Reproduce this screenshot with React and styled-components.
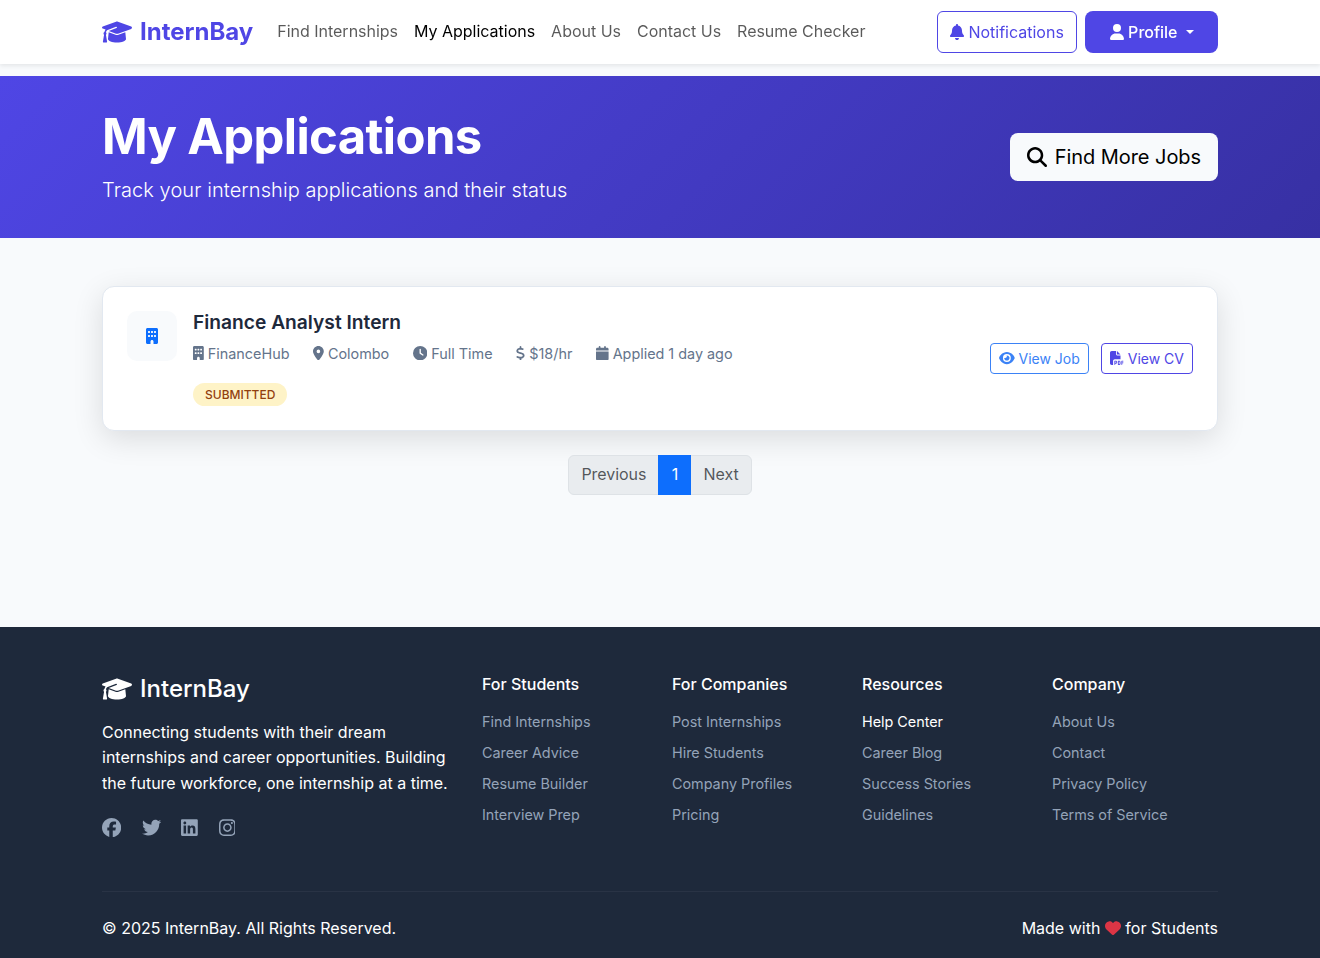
import React from "react";
import styled, { createGlobalStyle, css } from "styled-components";
import {
  FaBell,
  FaUser,
  FaMagnifyingGlass,
  FaBuilding,
  FaLocationDot,
  FaClock,
  FaDollarSign,
  FaCalendar,
  FaEye,
  FaFilePdf,
  FaFacebook,
  FaTwitter,
  FaLinkedin,
  FaInstagram,
  FaHeart,
} from "react-icons/fa6";

const GlobalStyle = createGlobalStyle`
  *, *::before, *::after { box-sizing: border-box; }
  body {
    margin: 0;
    font-family: "Inter", "Liberation Sans", sans-serif;
    font-size: 16px;
    line-height: 1.6;
    color: #1e293b;
    background: #f8fafc;
  }
  h1, h2, h3, h4, p, ul { margin: 0; padding: 0; }
  ul { list-style: none; }
  a { color: inherit; text-decoration: none; }
  button { font-family: inherit; cursor: pointer; }
`;

/* Each glyph is 1em tall; $w is its advance width in em. */
const Icon = styled.span`
  display: inline-block;
  width: ${(p) => p.$w || 1}em;
  height: 1em;
  line-height: 1;
  vertical-align: -0.125em;
  color: ${(p) => p.$color || "inherit"};

  svg {
    display: block;
    width: 100%;
    height: 100%;
  }
`;

const CapIcon = styled(Icon)`
  margin-bottom: 1px;
`;

const Page = styled.div`
  display: flex;
  flex-direction: column;
  min-height: 958px;
`;

const Container = styled.div`
  width: 1140px;
  margin: 0 auto;
  padding: 0 12px;
`;

const Navbar = styled.header`
  position: sticky;
  top: 0;
  z-index: 10;
  height: 64px;
  margin-bottom: 12px;
  background: #fff;
  box-shadow: 0 2px 4px rgba(0, 0, 0, 0.08);
  will-change: transform;
`;

const NavInner = styled(Container)`
  display: flex;
  align-items: center;
  height: 100%;
`;

const Brand = styled.a`
  display: flex;
  align-items: center;
  gap: 8px;
  margin-right: 16px;
  font-size: 24px;
  font-weight: 700;
  line-height: 36px;
  color: #4f46e5;
`;

const NavLinks = styled.nav`
  display: flex;
  flex: 1;
`;

const NavLink = styled.a`
  padding: 7px 8px 9px;
  line-height: 24px;
  letter-spacing: -0.015px;
  color: ${(p) => (p.$active ? "#000" : "rgba(0, 0, 0, 0.65)")};
`;

const NavActions = styled.div`
  display: flex;
  gap: 8px;
`;

const NotificationsButton = styled.button`
  height: 42px;
  padding: 0 12.5px 0 12px;
  border: 1px solid #4f46e5;
  border-radius: 6px;
  background: transparent;
  color: #4f46e5;
  font-size: 16px;
  line-height: 24px;
`;

const ProfileButton = styled.button`
  height: 42px;
  padding: 0 24.5px;
  border: 0;
  border-radius: 8px;
  background: #4f46e5;
  color: #fff;
  font-size: 16px;
  font-weight: 500;
  line-height: 24px;

  &::after {
    content: "";
    display: inline-block;
    margin-left: 8px;
    vertical-align: 4.08px;
    border-top: 4.8px solid;
    border-right: 4.8px solid transparent;
    border-left: 4.8px solid transparent;
  }
`;

const Hero = styled.section`
  padding: 32px 0;
  color: #fff;
  background: linear-gradient(135deg, #4f46e5 0%, #3730a3 100%);
`;

const HeroInner = styled(Container)`
  display: flex;
  align-items: center;
  justify-content: space-between;
`;

const HeroTitle = styled.h1`
  margin-bottom: 8px;
  font-size: 49px;
  font-weight: 700;
  line-height: 57.6px;
  letter-spacing: -0.64px;
`;

const HeroLead = styled.p`
  font-size: 20px;
  font-weight: 300;
  letter-spacing: 0.08px;
`;

const FindButton = styled.a`
  display: flex;
  align-items: center;
  gap: 8px;
  height: 48px;
  padding: 0 17px;
  border-radius: 8px;
  background: #f8fafc;
  color: #000;
  font-size: 20px;
  line-height: 30px;
  letter-spacing: -0.06px;
`;

const Main = styled.main`
  height: 389.4px;
  padding-top: 48px;
`;

const Card = styled.article`
  display: flex;
  align-items: center;
  height: 145px;
  padding: 24px;
  border: 1px solid #e2e8f0;
  border-radius: 12px;
  background: #fff;
  box-shadow: 0 8px 30px rgba(0, 0, 0, 0.12);
`;

const CompanyLogo = styled.div`
  display: flex;
  align-items: center;
  justify-content: center;
  align-self: flex-start;
  width: 50px;
  height: 50px;
  margin-right: 16px;
  border-radius: 10px;
  background: #f8fafc;
  color: #0d6efd;
`;

const JobInfo = styled.div`
  flex: 1;
  align-self: flex-start;
`;

const JobTitle = styled.h2`
  margin-bottom: 8px;
  font-size: 19.2px;
  font-weight: 600;
  line-height: 1.2;
`;

const MetaRow = styled.div`
  display: flex;
  gap: 23.7px;
  margin-bottom: 18px;
  color: #64748b;
  font-size: 14.4px;
  letter-spacing: -0.01px;
`;

const StatusBadge = styled.span`
  display: block;
  width: max-content;
  padding: 4px 12px;
  border-radius: 20px;
  background: #fef3c7;
  color: #92400e;
  font-size: 12px;
  font-weight: 500;
  line-height: 15px;
  text-transform: uppercase;
`;

const CardActions = styled.div`
  display: flex;
  gap: 12px;
`;

const OutlineButton = styled.a`
  padding: 4px 8px;
  border: 1px solid currentColor;
  border-radius: 4px;
  color: ${(p) => p.$color};
  font-size: 14px;
  line-height: 21px;
`;

const Pagination = styled.ul`
  display: flex;
  justify-content: center;
  margin-top: 24px;
`;

const activePage = css`
  z-index: 1;
  min-width: 33px;
  border-color: #0d6efd;
  background: #0d6efd;
  color: #fff;
`;

const PageItem = styled.li`
  height: 40px;
  padding: 6px 12px;
  border: 1px solid #dee2e6;
  background: #e9ecef;
  color: rgba(33, 37, 41, 0.75);
  text-align: center;
  letter-spacing: -0.04px;

  & + & { margin-left: -1px; }
  &:first-child { border-radius: 6px 0 0 6px; }
  &:last-child { border-radius: 0 6px 6px 0; }
  ${(p) => p.$active && activePage}
`;

const Footer = styled.footer`
  flex: 1;
  padding: 48px 0 0;
  background: #1e293b;
  color: #fff;
`;

const FooterTop = styled.div`
  display: grid;
  grid-template-columns: 380px repeat(4, 190px);
  height: 216px;
  width: 1116px;
`;

const FooterBrand = styled.h3`
  display: flex;
  align-items: center;
  gap: 8px;
  margin-bottom: 16px;
  font-size: 24px;
  font-weight: 500;
  line-height: 1.2;
`;

const FooterText = styled.p`
  width: 356px;
`;

const Socials = styled.div`
  display: flex;
  gap: 20.5px;
  margin-top: 16px;
  color: #94a3b8;
  font-size: 19.2px;
`;

const FooterHeading = styled.h4`
  margin-bottom: 16px;
  font-size: 16px;
  font-weight: 500;
  line-height: 1.2;
`;

const FooterLink = styled.li`
  margin-bottom: 8px;
  color: ${(p) => (p.$highlight ? "#fff" : "#94a3b8")};
  font-size: 14.4px;
  letter-spacing: -0.02px;
`;

const FooterBottom = styled.div`
  display: flex;
  justify-content: space-between;
  padding-top: 24px;
  border-top: 1px solid rgba(255, 255, 255, 0.05);
`;

const navItems = ["Find Internships", "My Applications", "About Us", "Contact Us", "Resume Checker"];

const meta = [
  [FaBuilding, 0.75, "FinanceHub"],
  [FaLocationDot, 0.75, "Colombo"],
  [FaClock, 1, "Full Time"],
  [FaDollarSign, 0.625, "$18/hr"],
  [FaCalendar, 0.875, "Applied 1 day ago"],
];

const socials = [
  [FaFacebook, 1, "Facebook"],
  [FaTwitter, 1, "Twitter"],
  [FaLinkedin, 0.875, "LinkedIn"],
  [FaInstagram, 0.875, "Instagram"],
];

const footerColumns = [
  ["For Students", ["Find Internships", "Career Advice", "Resume Builder", "Interview Prep"]],
  ["For Companies", ["Post Internships", "Hire Students", "Company Profiles", "Pricing"]],
  ["Resources", ["Help Center", "Career Blog", "Success Stories", "Guidelines"]],
  ["Company", ["About Us", "Contact", "Privacy Policy", "Terms of Service"]],
];

function GraduationCap() {
  return (
    <CapIcon $w={1.25}>
      <svg viewBox="0 0 640 512" fill="currentColor" aria-hidden="true">
        <path d="M623.1 136.9l-282.7-101.2c-13.73-4.91-27.7-4.91-41.43 0L16.05 136.9C6.438 140.4 0 149.6 0 160s6.438 19.65 16.05 23.09L76.07 204.6c-11.89 15.8-20.26 34.16-24.55 53.95C40.05 263.4 32 274.8 32 288c0 9.953 4.814 18.49 11.94 24.65l-24.83 149C17.48 471.1 25 480 34.89 480H93.11c9.887 0 17.41-8.879 15.78-18.63l-24.83-149C91.19 306.5 96 297.1 96 288c0-10.29-5.174-19.03-12.72-24.89c4.252-17.76 12.88-33.82 24.94-47.03l190.6-73.3c8.26-3.175 17.54 .941 20.7 9.215c3.165 8.253-.9512 17.53-9.215 20.69L144.5 236.5l154.4 55.3c13.73 4.91 27.7 4.91 41.43 0l282.7-101.2C633.6 179.6 640 170.4 640 160S633.6 140.4 623.1 136.9zM351.1 314.4C341.7 318.5 330.9 320 320 320c-10.92 0-21.69-1.867-32-5.555L142.8 262.5L128 405.3C128 446.6 213.1 480 320 480c105.1 0 192-33.4 192-74.67l-14.78-142.9L351.1 314.4z" />
      </svg>
    </CapIcon>
  );
}

export default function App() {
  return (
    <Page>
      <GlobalStyle />
      <Navbar>
        <NavInner>
          <Brand href="#">
            <GraduationCap />
            <span>InternBay</span>
          </Brand>
          <NavLinks>
            {navItems.map((item) => (
              <NavLink key={item} href="#" $active={item === "My Applications"}>
                {item}
              </NavLink>
            ))}
          </NavLinks>
          <NavActions>
            <NotificationsButton>
              <Icon $w={0.875}><FaBell /></Icon> Notifications
            </NotificationsButton>
            <ProfileButton>
              <Icon $w={0.875}><FaUser /></Icon> Profile
            </ProfileButton>
          </NavActions>
        </NavInner>
      </Navbar>

      <Hero>
        <HeroInner>
          <div>
            <HeroTitle>My Applications</HeroTitle>
            <HeroLead>Track your internship applications and their status</HeroLead>
          </div>
          <FindButton href="#">
            <Icon><FaMagnifyingGlass /></Icon>
            <span>Find More Jobs</span>
          </FindButton>
        </HeroInner>
      </Hero>

      <Main>
        <Container>
          <Card>
            <CompanyLogo>
              <Icon $w={0.75}><FaBuilding /></Icon>
            </CompanyLogo>
            <JobInfo>
              <JobTitle>Finance Analyst Intern</JobTitle>
              <MetaRow>
                {meta.map(([Glyph, width, label]) => (
                  <span key={label}>
                    <Icon $w={width}><Glyph /></Icon> {label}
                  </span>
                ))}
              </MetaRow>
              <StatusBadge>Submitted</StatusBadge>
            </JobInfo>
            <CardActions>
              <OutlineButton href="#" $color="#3b82f6">
                <Icon $w={1.125}><FaEye /></Icon> View Job
              </OutlineButton>
              <OutlineButton href="#" $color="#4f46e5">
                <Icon><FaFilePdf /></Icon> View CV
              </OutlineButton>
            </CardActions>
          </Card>
          <Pagination>
            <PageItem>Previous</PageItem>
            <PageItem $active>1</PageItem>
            <PageItem>Next</PageItem>
          </Pagination>
        </Container>
      </Main>

      <Footer>
        <Container>
          <FooterTop>
            <div>
              <FooterBrand>
                <GraduationCap />
                <span>InternBay</span>
              </FooterBrand>
              <FooterText>
                Connecting students with their dream internships and career opportunities. Building the
                future workforce, one internship at a time.
              </FooterText>
              <Socials>
                {socials.map(([Glyph, width, name]) => (
                  <a key={name} href="#" aria-label={name}>
                    <Icon $w={width}><Glyph /></Icon>
                  </a>
                ))}
              </Socials>
            </div>
            {footerColumns.map(([title, links]) => (
              <div key={title}>
                <FooterHeading>{title}</FooterHeading>
                <ul>
                  {links.map((link) => (
                    <FooterLink key={link} $highlight={link === "Help Center"}>
                      <a href="#">{link}</a>
                    </FooterLink>
                  ))}
                </ul>
              </div>
            ))}
          </FooterTop>
          <FooterBottom>
            <p>© 2025 InternBay. All Rights Reserved.</p>
            <p>
              Made with <Icon $color="#dc3545"><FaHeart /></Icon> for Students
            </p>
          </FooterBottom>
        </Container>
      </Footer>
    </Page>
  );
}
